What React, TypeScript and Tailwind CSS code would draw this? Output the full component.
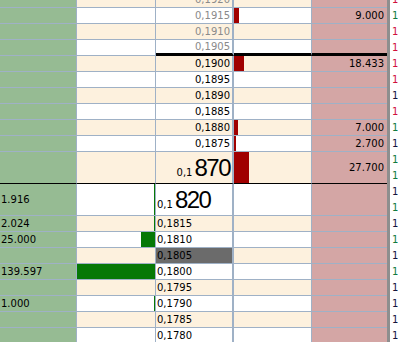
import React from 'react';

type Row = {
  price: string;
  big?: boolean;
  dim?: boolean;
  lower?: boolean;
  hl?: boolean;
  bid?: number;
  ask?: number;
  f: [string, string][];
};

const MAX = 139.597;
const BAR = 78;

const rows: Row[] = [
  { price: '0,1920', dim: true, f: [['16:58', 'r']] },
  { price: '0,1915', dim: true, ask: 9, f: [['17:02', 'g']] },
  { price: '0,1910', dim: true, f: [['16:41', 'r']] },
  { price: '0,1905', dim: true, f: [['16:40', 'r']] },
  { price: '0,1900', ask: 18.433, f: [['16:39', 'r']] },
  { price: '0,1895', f: [['16:33', 'r']] },
  { price: '0,1890', f: [['16:31', 'k']] },
  { price: '0,1885', f: [['16:30', 'r']] },
  { price: '0,1880', ask: 7, f: [['16:22', 'g']] },
  { price: '0,1875', ask: 2.7, f: [['16:12', 'k']] },
  { price: '0,1870', big: true, ask: 27.7, f: [['16:10', 'g'], ['16:08', 'g']] },
  { price: '0,1820', big: true, lower: true, bid: 1.916, f: [['16:05', 'k'], ['16:03', 'g']] },
  { price: '0,1815', lower: true, bid: 2.024, f: [['16:01', 'k']] },
  { price: '0,1810', lower: true, bid: 25, f: [['16:00', 'g']] },
  { price: '0,1805', lower: true, hl: true, f: [['16:00', 'k']] },
  { price: '0,1800', lower: true, bid: 139.597, f: [['16:00', 'g']] },
  { price: '0,1795', lower: true, f: [['16:00', 'k']] },
  { price: '0,1790', lower: true, bid: 1, f: [['16:00', 'k']] },
  { price: '0,1785', lower: true, f: [['13:59', 'k']] },
  { price: '0,1780', lower: true, f: [['14:58', 'k']] },
];

const fColor: Record<string, string> = {
  r: 'text-[#d0103c]',
  g: 'text-[#107a40]',
  k: 'text-[#14143c]',
};

// 139597 -> "139.597"
const vol = (v: number) => {
  const [i, d] = v.toFixed(3).split('.');
  return `${Number(i).toLocaleString('de-DE')}.${d}`;
};

const barWidth = (v: number) => Math.max(1, Math.round((v / MAX) * BAR));

const Price: React.FC<{ row: Row }> = ({ row }) => {
  if (!row.big) return <span>{row.price}</span>;
  return (
    <span className="flex items-baseline">
      <span className="text-[10px]">0,1</span>
      <span className="text-[24px] tracking-[-1.5px] ml-[2px] font-['Liberation_Sans',Arial,sans-serif]">
        {row.price.slice(3)}
      </span>
    </span>
  );
};

export default function App() {
  return (
    <div className="w-[398px] h-[342px] overflow-hidden bg-white font-['DejaVu_Sans',Verdana,sans-serif] text-[10px] text-black leading-none">
      <div className="-mt-2">
        {rows.map((row, i) => {
          const bg = i % 2 === 0 ? 'bg-[#fdf1de]' : 'bg-white';
          const line = i === 10 ? 'border-b border-black' : 'border-b border-[#9fb1c6]';
          const lineR = i === 3 ? 'border-b-[3px] border-b-black' : line;
          return (
            <div key={row.price} className={`flex ${row.big ? 'h-8' : 'h-4'}`}>
              {/* bid volume */}
              <div className={`w-[77px] shrink-0 bg-[#96bb93] border-r border-r-[#9fb1c6] ${line} flex items-center pl-[1px] whitespace-nowrap`}>
                {row.bid !== undefined && vol(row.bid)}
              </div>
              {/* bid bar */}
              <div className={`w-[79px] shrink-0 ${bg} border-r border-r-[#9fb1c6] ${line} flex justify-end`}>
                {row.bid !== undefined && <div className="h-full bg-[#067806]" style={{ width: barWidth(row.bid) }} />}
              </div>
              {/* price */}
              <div
                className={`w-[78px] shrink-0 border-r-2 border-r-[#9fb1c6] ${lineR} flex items-center whitespace-nowrap ${
                  row.hl ? 'bg-[#6b6b6b]' : bg
                } ${row.lower ? 'justify-start pl-[1px]' : 'justify-end pr-[2px]'} ${row.dim ? 'text-[#8a8a8a]' : 'text-black'}`}
              >
                <Price row={row} />
              </div>
              {/* ask bar */}
              <div className={`w-[78px] shrink-0 ${bg} border-r border-r-[#9fb1c6] ${lineR} flex justify-start`}>
                {row.ask !== undefined && <div className="h-full bg-[#a00000]" style={{ width: barWidth(row.ask) }} />}
              </div>
              {/* ask volume */}
              <div className={`w-[75px] shrink-0 bg-[#d4a6a5] ${lineR} flex items-center justify-end pr-[3px] whitespace-nowrap`}>
                {row.ask !== undefined && vol(row.ask)}
              </div>
              <div className="w-[3px] shrink-0 bg-[#8e8e8e]" />
              {/* time */}
              <div className="flex-1 overflow-hidden flex flex-col pl-[2px] whitespace-nowrap">
                {row.f.map(([t, c], k) => (
                  <div key={k} className={`h-4 flex items-center ${fColor[c]}`}>
                    {t}
                  </div>
                ))}
              </div>
            </div>
          );
        })}
      </div>
    </div>
  );
}
